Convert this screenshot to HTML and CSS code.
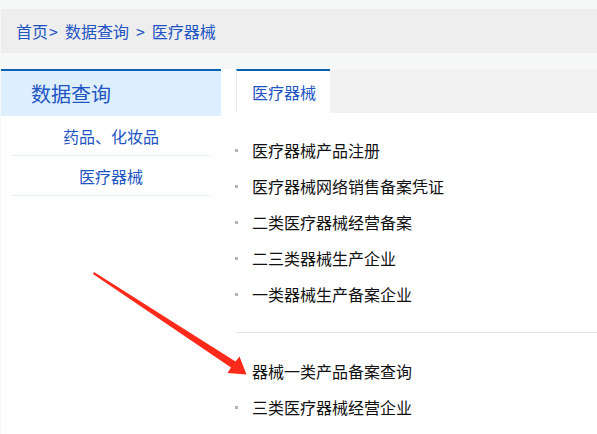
FILE: index.html
```html
<!DOCTYPE html>
<html lang="zh-CN">
<head>
<meta charset="utf-8">
<title>医疗器械 - 数据查询</title>
<link rel="stylesheet" href="styles.css">
</head>
<body>
<div class="crumbs"><a class="crumb">首页</a><span class="sep-a">&gt;</span><a class="crumb">数据查询</a><span class="sep-b">&gt;</span><a class="crumb">医疗器械</a></div>
<div class="main">
  <aside class="side">
    <div class="side-title">数据查询</div>
    <a class="side-item">药品、化妆品</a>
    <a class="side-item">医疗器械</a>
  </aside>
  <section class="content">
    <div class="tabs"><div class="tab">医疗器械</div></div>
    <ul class="list">
      <li>医疗器械产品注册</li>
      <li>医疗器械网络销售备案凭证</li>
      <li>二类医疗器械经营备案</li>
      <li>二三类器械生产企业</li>
      <li>一类器械生产备案企业</li>
    </ul>
    <div class="sep"></div>
    <ul class="list list-2">
      <li>器械一类产品备案查询</li>
      <li>三类医疗器械经营企业</li>
    </ul>
  </section>
</div>
<svg class="arrow" width="597" height="434" viewBox="0 0 597 434">
  <polygon points="94,272 235.5,361.5 239.5,356.5 246.5,374.5 227.5,373 231,367.5 93,274" fill="#ff2a1a"/>
</svg>
</body>
</html>
```
FILE: styles.css
```css
html, body {
  margin: 0;
  padding: 0;
}
body {
  background: #f6f8f8;
  font-family: "Noto Sans CJK SC", "Liberation Sans", sans-serif;
  padding-top: 9px;
  position: relative;
  overflow: hidden;
}
a { text-decoration: none; }
.crumbs {
  margin-left: 1px;
  height: 44px;
  line-height: 44px;
  background: #eeeeee;
  padding-left: 15px;
  font-size: 16px;
  color: #2255c4;
}
.crumb { color: #2255c4; }
.sep-a {
  margin: 0 7px 0 1px;
}
.sep-b {
  margin: 0 7px;
}
.main {
  margin-top: 16px;
  margin-left: 1px;
  background: #ffffff;
  display: flex;
  min-height: 370px;
}
.side {
  width: 220px;
  flex: none;
  border-top: 2px solid #0b63b6;
}
.side-title {
  height: 45px;
  line-height: 45px;
  background: #ddeefd;
  padding-left: 30px;
  font-size: 20px;
  color: #2255c4;
}
.side-item {
  display: block;
  margin: 0 10px;
  height: 39px;
  line-height: 40px;
  border-bottom: 1px solid #e3eef8;
  text-align: center;
  font-size: 16px;
  color: #2255c4;
}
.content {
  flex: 1;
  margin-left: 15px;
}
.tabs {
  height: 44px;
  background: #f2f2f2;
  display: flex;
}
.tab {
  width: 78px;
  height: 42px;
  line-height: 43px;
  border-top: 2px solid #0b63b6;
  border-left: 1px solid #e6e9ec;
  background: #ffffff;
  padding-left: 15px;
  font-size: 16px;
  color: #2255c4;
}
.list {
  list-style: none;
  margin: 0;
  padding: 19px 0 0 0;
}
.list li {
  display: flex;
  align-items: center;
  height: 36px;
  font-size: 16px;
  color: #111111;
}
.list li::before {
  content: "";
  width: 3px;
  height: 3px;
  background: #b5b5b5;
  margin-left: -1px;
  margin-right: 14px;
}
.sep {
  margin-top: 20px;
  height: 1px;
  background: #e2e6ea;
}
.list-2 {
  padding-top: 20px;
}
.arrow {
  position: absolute;
  left: 0;
  top: 0;
  pointer-events: none;
}
```
